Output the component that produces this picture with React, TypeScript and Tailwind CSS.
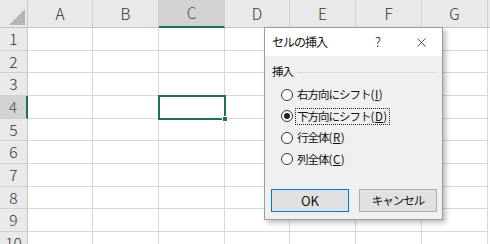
import { X } from 'lucide-react';

const COLS = [
  { label: 'A', w: 65 },
  { label: 'B', w: 66 },
  { label: 'C', w: 66 },
  { label: 'D', w: 65 },
  { label: 'E', w: 66 },
  { label: 'F', w: 66 },
  { label: 'G', w: 66 },
];
const ROW_H = [23, 22, 23, 23, 22, 23, 23, 22, 23, 23];

const font = { fontFamily: '"Noto Sans CJK JP", "Noto Sans", sans-serif' };

const Radio = ({ checked, label, mnemonic, focused }: { checked?: boolean; label: string; mnemonic: string; focused?: boolean }) => (
  <div className="flex items-center h-[21.5px] pl-[16px]">
    <span className="w-[12px] h-[12px] rounded-full border border-[#333] bg-white flex items-center justify-center">
      {checked && <span className="w-[6px] h-[6px] rounded-full bg-[#222]" />}
    </span>
    <span
      className={`ml-[3px] px-[1px] leading-[15px] text-[11.5px] text-[#111] ${focused ? 'outline outline-1 outline-dotted outline-[#222]' : ''}`}
    >
      <span className="tracking-[-1px]">{label}</span>
      <span className="tracking-[0.5px]">(<span className="underline">{mnemonic}</span>)</span>
    </span>
  </div>
);

const App = () => {
  return (
    <div className="relative w-[490px] h-[244px] overflow-hidden bg-white" style={font}>
      {/* header row */}
      <div className="flex h-[28px] bg-[#e9e9e9] border-b border-[#c6c6c6]">
        <div className="w-[28px] shrink-0 border-r border-[#c6c6c6] relative">
          <svg width="28" height="27" className="absolute left-0 top-0">
            <polygon points="9,25 25,25 25,9" fill="#b5b5b5" />
          </svg>
        </div>
        {COLS.map((c) => (
          <div
            key={c.label}
            style={{ width: c.w }}
            className={`shrink-0 flex items-center justify-center text-[15.5px] font-light border-r border-[#d0d0d0] ${
              c.label === 'C' ? 'bg-[#d2d2d2] text-[#3c5e4a] border-b-2 border-b-[#217346] -mb-[1px]' : 'text-[#333]'
            }`}
          >
            {c.label}
          </div>
        ))}
      </div>
      {/* rows */}
      {ROW_H.map((h, i) => (
        <div key={i} className="flex" style={{ height: h }}>
          <div
            className={`w-[28px] shrink-0 flex items-center justify-center text-[15.5px] font-light border-b border-[#d0d0d0] ${
              i === 3 ? 'bg-[#d2d2d2] text-[#3c5e4a] border-r-2 border-r-[#217346]' : 'bg-[#e9e9e9] text-[#333] border-r border-r-[#c6c6c6]'
            }`}
          >
            {i + 1}
          </div>
          {COLS.map((c) => (
            <div key={c.label} style={{ width: c.w }} className="shrink-0 border-r border-b border-[#d8d8d8]" />
          ))}
        </div>
      ))}
      {/* selected cell C4 */}
      <div className="absolute left-[158px] top-[95px] w-[68px] h-[25px] border-2 border-[#217346]">
        <span className="absolute -right-[4px] -bottom-[4px] w-[6px] h-[6px] bg-[#217346] border border-white" />
      </div>

      {/* dialog */}
      <div className="absolute left-[264px] top-[27px] w-[179px] h-[193px] bg-[#f0f0f0] border border-[#9a9a9a] shadow-[3px_3px_5px_rgba(0,0,0,0.25)] flex flex-col">
        <div className="h-[28px] bg-white flex items-center pl-[7px] text-[12px] text-[#111]">
          <span className="flex-1 tracking-[-1px]">セルの挿入</span>
          <span className="w-[20px] text-center text-[13px] font-light mr-[26px]">?</span>
          <X size={15} strokeWidth={1.2} className="mr-[13px] text-[#222]" />
        </div>
        <div className="flex items-center pl-[7px] pr-[5px] mt-[6px] h-[20px] text-[11.5px] tracking-[-1px] text-[#111]">
          <span>挿入</span>
          <span className="flex-1 ml-[4px] border-t border-[#dcdcdc]" />
        </div>
        <div className="mt-[2px]">
          <Radio label="右方向にシフト" mnemonic="I" />
          <Radio label="下方向にシフト" mnemonic="D" checked focused />
          <Radio label="行全体" mnemonic="R" />
          <Radio label="列全体" mnemonic="C" />
        </div>
        <div className="flex gap-[10px] pl-[6px] mt-[19px]">
          <button className="w-[78px] h-[23px] bg-[#e1e1e1] border border-[#0078d7] text-[13px] text-[#111]">OK</button>
          <button className="w-[78px] h-[23px] bg-[#e1e1e1] border border-[#adadad] text-[11.5px] tracking-[-1px] text-[#111]">キャンセル</button>
        </div>
      </div>
    </div>
  );
};

export default App;
